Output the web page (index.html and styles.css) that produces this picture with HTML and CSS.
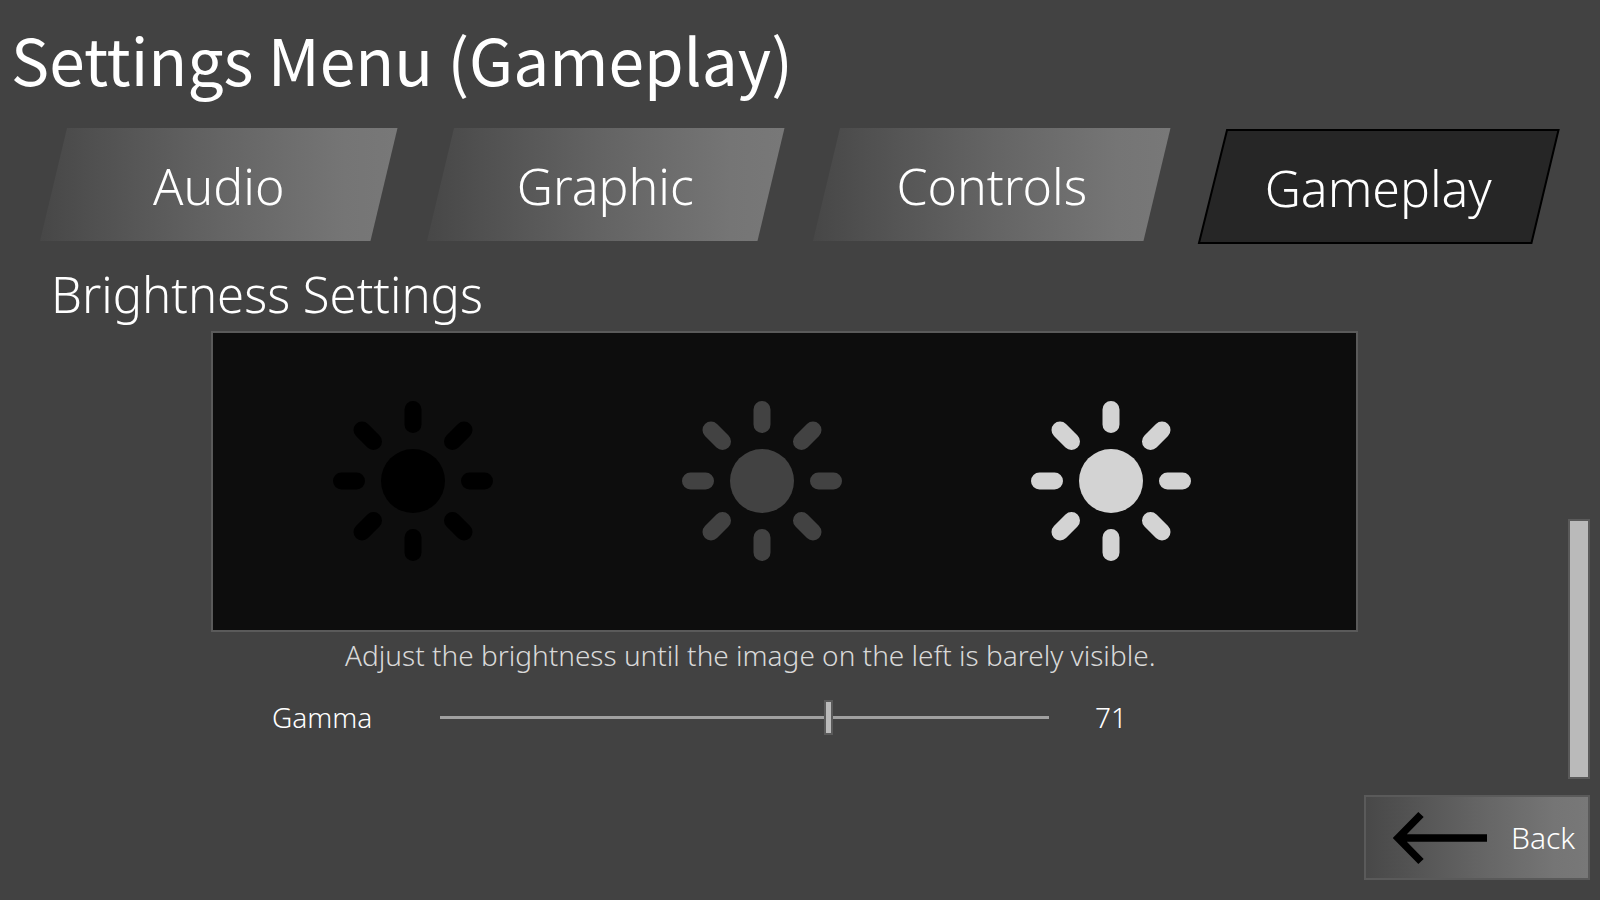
FILE: index.html
```
<!DOCTYPE html>
<html lang="en">
<head>
<meta charset="utf-8">
<title>Settings Menu (Gameplay)</title>
<link rel="stylesheet" href="styles.css">
</head>
<body>
<svg class="defs" aria-hidden="true">
  <defs>
    <linearGradient id="tab-fill" x1="0" y1="0" x2="1" y2="0">
      <stop offset="0" stop-color="#474747"/>
      <stop offset="0.15" stop-color="#505050"/>
      <stop offset="0.5" stop-color="#646464"/>
      <stop offset="0.85" stop-color="#757575"/>
      <stop offset="1" stop-color="#787878"/>
    </linearGradient>
    <symbol id="sun" viewBox="-80 -80 160 160">
      <circle r="32" fill="currentColor"/>
      <g stroke="currentColor" stroke-width="17" stroke-linecap="round">
        <path d="M0-71.500V-56.500M0 56.500V71.500M-71.500 0H-56.500M56.500 0H71.500M-51-51L-39.500-39.500M51-51L39.500-39.500M-51 51L-39.500 39.500M51 51L39.500 39.500"/>
      </g>
    </symbol>
  </defs>
</svg>
<h1 class="title">Settings Menu (Gameplay)</h1>
<nav class="tabs">
  <button class="tab" type="button"><svg class="tab-shape" viewBox="0 0 357 113" preserveAspectRatio="none" aria-hidden="true"><polygon points="27,0 357,0 330,113 0,113" fill="url(#tab-fill)"/></svg><span class="tab-label">Audio</span></button>
  <button class="tab" type="button"><svg class="tab-shape" viewBox="0 0 357 113" preserveAspectRatio="none" aria-hidden="true"><polygon points="27,0 357,0 330,113 0,113" fill="url(#tab-fill)"/></svg><span class="tab-label">Graphic</span></button>
  <button class="tab" type="button"><svg class="tab-shape" viewBox="0 0 357 113" preserveAspectRatio="none" aria-hidden="true"><polygon points="27,0 357,0 330,113 0,113" fill="url(#tab-fill)"/></svg><span class="tab-label">Controls</span></button>
  <button class="tab tab-selected" type="button" aria-current="page"><svg class="tab-shape" viewBox="0 0 357 113" preserveAspectRatio="none" aria-hidden="true"><polygon points="27,0 358,0 331,113 -1,113" fill="#262626" stroke="#000" stroke-width="2"/></svg><span class="tab-label">Gameplay</span></button>
</nav>
<div class="body">
  <main class="content">
    <h2 class="section-title">Brightness Settings</h2>
    <div class="preview">
      <svg class="sun sun-dark" aria-hidden="true"><use href="#sun"/></svg>
      <svg class="sun sun-mid" aria-hidden="true"><use href="#sun"/></svg>
      <svg class="sun sun-light" aria-hidden="true"><use href="#sun"/></svg>
    </div>
    <p class="hint">Adjust the brightness until the image on the left is barely visible.</p>
    <div class="gamma">
      <label class="gamma-label" for="gamma">Gamma</label>
      <input class="gamma-slider" id="gamma" type="range" min="0" max="111" value="71">
      <output class="gamma-value" for="gamma">71</output>
    </div>
  </main>
  <div class="scroll"><div class="scroll-thumb"></div></div>
</div>
<footer class="footer">
  <button class="back" type="button">
    <svg class="back-arrow" viewBox="0 0 94 54" aria-hidden="true"><path d="M28 3.500L5 27L28 50.500M5 27H94" fill="none" stroke="#000" stroke-width="7.500"/></svg>
    Back
  </button>
</footer>
</body>
</html>
```
FILE: styles.css
```
* { box-sizing: border-box; }

body {
  margin: 0;
  min-height: 100vh;
  display: flex;
  flex-direction: column;
  background: #424242;
  color: #fff;
  font-family: "Noto Sans", sans-serif;
  font-weight: 300;
}

.defs { position: absolute; width: 0; height: 0; }

.title {
  margin: 0;
  padding: 10px 11px 22px;
  font-family: "Noto Sans CJK SC", sans-serif;
  font-size: 64px;
  font-weight: 400;
  line-height: 96px;
}

.tabs {
  display: flex;
  gap: 29px;
  padding: 0 43px 0 40px;
}

.tab {
  position: relative;
  flex: 1;
  height: 113px;
  padding: 0;
  border: 0;
  background: none;
  color: #fff;
  font: inherit;
  font-size: 50px;
  line-height: 116px;
}

.tab-selected { margin-top: 2px; }

.tab-shape {
  position: absolute;
  inset: 0;
  width: 100%;
  height: 100%;
  overflow: visible;
}

.tab-label { position: relative; }

.body {
  flex: 1;
  display: flex;
  padding-right: 10px;
}

.content { flex: 1; }

.section-title {
  margin: 0;
  padding: 17px 0 3px 51px;
  font-size: 49px;
  font-weight: 300;
  line-height: 68px;
}

.preview {
  display: flex;
  align-items: center;
  gap: 189px;
  height: 301px;
  margin: 0 210px 0 211px;
  padding: 0 0 2px 120px;
  border: 2px solid #5a5a5a;
  background: #0d0d0d;
}

.sun { width: 160px; height: 160px; }
.sun-dark { color: #000; }
.sun-mid { color: #424242; }
.sun-light { color: #d3d3d3; }

.hint {
  margin: 0;
  padding: 3px 0 0 345px;
  color: #d9d9d9;
  font-size: 28px;
  line-height: 40px;
}

.gamma {
  display: flex;
  align-items: center;
  padding: 22px 0 0 272px;
  font-size: 28px;
  line-height: 40px;
}

.gamma-label { width: 168px; }

.gamma-slider {
  appearance: none;
  width: 609px;
  height: 35px;
  margin: 0;
  background: none;
}

.gamma-slider::-webkit-slider-runnable-track {
  height: 3px;
  background: #a0a0a0;
}

.gamma-slider::-webkit-slider-thumb {
  appearance: none;
  width: 9px;
  height: 35px;
  margin-top: -16px;
  border: 2px solid #5a5a5a;
  background: #bababa;
}

.gamma-value { margin-left: 46px; }

.scroll {
  display: flex;
  align-items: flex-end;
  width: 22px;
}

.scroll-thumb {
  width: 100%;
  height: 260px;
  border: 2px solid #5a5a5a;
  background: #bababa;
}

.footer {
  display: flex;
  justify-content: flex-end;
  padding: 16px 10px 20px;
}

.back {
  display: flex;
  align-items: center;
  gap: 24px;
  width: 226px;
  height: 85px;
  padding: 0 0 0 27px;
  border: 2px solid #5a5a5a;
  background: linear-gradient(90deg, #484848, #505050 15%, #646464 50%, #757575 85%, #787878);
  color: #fff;
  font: inherit;
  font-size: 30px;
}

.back-arrow { width: 94px; height: 54px; }
```
